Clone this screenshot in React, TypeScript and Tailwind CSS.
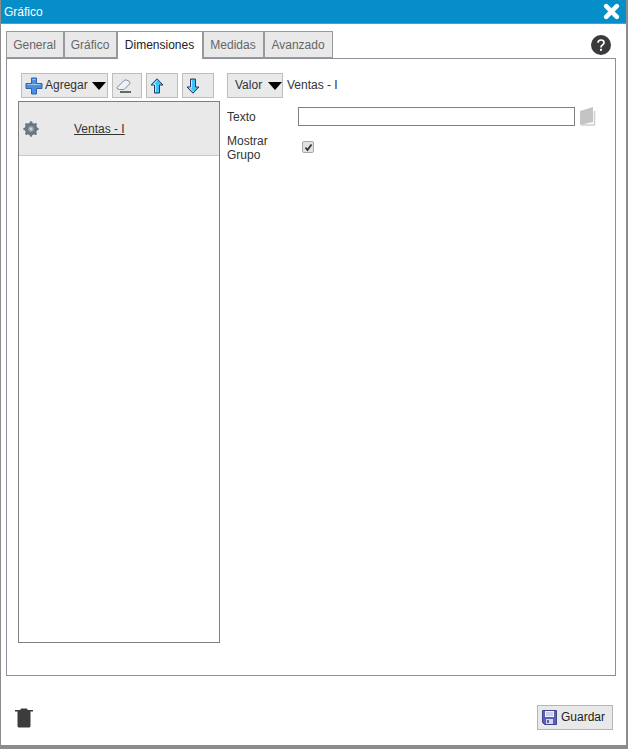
import React from "react";

const Caret = () => (
  <svg width="14" height="8" viewBox="0 0 14 8" className="shrink-0"><path d="M0 0h14L7 8z" fill="#000" /></svg>
);

const Plus = () => (
  <svg width="18" height="18" viewBox="0 0 18 18" className="shrink-0">
    <path d="M6.500 1h5v5.500H17v5h-5.500V17h-5v-5.500H1v-5h5.500z" fill="#4a90dc" stroke="#2b63b0" strokeWidth="1" />
    <path d="M7.500 2.500h3M2.500 7.500h13" stroke="#9cc6f0" strokeWidth="1" />
  </svg>
);

const Eraser = () => (
  <svg width="16" height="14" viewBox="0 0 16 14" className="shrink-0">
    <path d="M1 8.500 7.500 2Q9 0.500 10.500 1L13.500 2.500Q14.500 3.500 13.500 5L8 10.500H3.500Q1 10.500 1 8.500z" fill="#eef1f5" stroke="#7f8c9a" strokeWidth="1" />
    <path d="M4 13h11" stroke="#222" strokeWidth="1.300" />
  </svg>
);

const Arrow = ({ down }: { down?: boolean }) => (
  <svg width="14" height="16" viewBox="0 0 14 16" className="shrink-0" style={down ? { transform: "scaleY(-1)" } : undefined}>
    <path d="M7 0.800 13 7H9.500V15H4.500V7H1z" fill="#3cc4fa" stroke="#33335f" strokeWidth="1" strokeLinejoin="miter" />
    <path d="M7 2.500 3.500 6.200H5.500V14" stroke="#b6ecff" strokeWidth="1" fill="none" />
  </svg>
);

const Gear = () => (
  <svg width="16" height="16" viewBox="0 0 16 16" className="shrink-0">
    <g fill="#6c7680">
      <circle cx="8" cy="8" r="6.200" />
      {[0, 45, 90, 135].map((a) => (
        <rect key={a} x="6.700" y="0.300" width="2.600" height="15.400" rx="1" transform={`rotate(${a} 8 8)`} />
      ))}
    </g>
    <circle cx="8" cy="8" r="3" fill="#98a1aa" />
    <circle cx="8" cy="8" r="1.400" fill="#cfd5da" />
  </svg>
);

const Disk = () => (
  <svg width="15" height="15" viewBox="0 0 15 15" className="shrink-0">
    <path d="M0.500 0.500H14.500V14.500H2.500L0.500 12.500z" fill="#5a5fb8" stroke="#3f448f" strokeWidth="1" />
    <rect x="3" y="1" width="9" height="6" fill="#eef0f6" />
    <path d="M4 3h7M4 5h7" stroke="#a9adc8" strokeWidth="1" />
    <rect x="4" y="9" width="7" height="5" fill="#d4d6e6" />
    <rect x="5" y="10" width="2" height="3" fill="#5a5fb8" />
  </svg>
);

const ToolButton = ({ className, children }: { className: string; children: React.ReactNode }) => (
  <div className={`h-[25px] flex items-center border border-[#bdbdbd] bg-[#e9e9e9] ${className}`}>{children}</div>
);

const tabs = ["General", "Gráfico", "Dimensiones", "Medidas", "Avanzado"];
const tabWidths = ["w-[58px]", "w-[53px]", "w-[86px]", "w-[61px]", "w-[69px]"];

export default function App() {
  return (
    <div className="w-[628px] h-[749px] bg-white flex flex-col text-[12px] text-[#333] font-['Liberation_Sans',Arial,sans-serif] border-l border-[#8c8c8c] border-r-2 border-b-4">
      <div className="h-[24px] shrink-0 bg-[#068ec8] flex items-center justify-between pl-[3px] pr-[6px] border-b border-[#7f8f98] text-white">
        <span className="text-[12px]">Gráfico</span>
        <svg width="17" height="17" viewBox="0 0 17 17">
          <path d="M3.200 3.200 13.800 13.800M13.800 3.200 3.200 13.800" stroke="#fff" strokeWidth="4.600" strokeLinecap="round" />
        </svg>
      </div>

      <div className="flex-1 flex flex-col pl-[5px] pr-[10px] pt-[7px] min-h-0">
        <div className="h-[28px] flex items-start justify-between shrink-0 relative z-10">
          <div className="flex items-start h-[28px]">
            {tabs.map((t, i) =>
              i === 2 ? (
                <div key={t} className={`${tabWidths[i]} h-[28px] pb-px pr-px bg-white border border-[#999] border-b-0 flex items-center justify-center text-[#222]`}>{t}</div>
              ) : (
                <div key={t} className={`${tabWidths[i]} h-[27px] pr-px bg-[#e9e9e9] border border-[#999] flex items-center justify-center text-[#666]`}>{t}</div>
              )
            )}
          </div>
          <svg width="20" height="20" viewBox="0 0 20 20" className="mt-[4px] mr-[5px]">
            <circle cx="10" cy="10" r="10" fill="#3a3a3a" />
            <path d="M7 7.800Q7.100 5 10 5T13 7.500Q13 9 11.400 10T10 12.500" fill="none" stroke="#fff" strokeWidth="1.700" />
            <rect x="9" y="13.800" width="2" height="2" fill="#fff" />
          </svg>
        </div>

        <div className="h-[618px] -mt-px border border-[#8d9099] shrink-0 flex pl-[11px] pt-[14px] gap-[7px]">
          <div className="w-[202px] flex flex-col shrink-0">
            <div className="flex gap-[4px] pl-[3px] h-[25px]">
              <ToolButton className="w-[87px] pl-[3px] gap-[2px]">
                <Plus />
                <span className="mb-[2px]">Agregar</span>
                <span className="ml-[2px]"><Caret /></span>
              </ToolButton>
              <ToolButton className="w-[30px] pl-[3px]"><Eraser /></ToolButton>
              <ToolButton className="w-[32px] pl-[3px]"><Arrow /></ToolButton>
              <ToolButton className="w-[32px] pl-[3px]"><Arrow down /></ToolButton>
            </div>
            <div className="mt-[3px] h-[542px] border border-[#808080]">
              <div className="h-[54px] bg-[#e9e9e9] border-b border-[#c8c8c8] flex items-center pl-[4px]">
                <Gear />
                <span className="ml-[35px] underline">Ventas - I</span>
              </div>
            </div>
          </div>

          <div className="flex-1 flex flex-col">
            <div className="flex items-center h-[25px]">
              <ToolButton className="w-[56px] pl-[7px] gap-[5px]">
                <span className="mb-[2px]">Valor</span>
                <span className="ml-px"><Caret /></span>
              </ToolButton>
              <span className="ml-[4px] mb-[2px]">Ventas - I</span>
            </div>
            <div className="flex items-center mt-[9px] h-[19px]">
              <span className="w-[71px] mt-[1px]">Texto</span>
              <div className="w-[277px] h-[19px] border border-[#808080]" />
              <svg width="16" height="19" viewBox="0 0 16 19" className="ml-[5px]">
                <path d="M0 4 13 0V15L0 18z" fill="#c4c4c4" />
                <path d="M14.500 4V18H1" fill="none" stroke="#d0d0d0" strokeWidth="1.500" />
              </svg>
            </div>
            <div className="flex items-start mt-[8px]">
              <span className="w-[75px] leading-[14px]">Mostrar<br />Grupo</span>
              <div className="w-[12px] h-[12px] mt-[7px] rounded-[2px] border border-[#a8a8a8] bg-[#e2e2e2] flex items-center justify-center">
                <svg width="9" height="9" viewBox="0 0 9 9"><path d="M1.500 4.500 3.500 7 7.500 1.500" fill="none" stroke="#333" strokeWidth="1.800" /></svg>
              </div>
            </div>
          </div>
        </div>

        <div className="flex-1 flex items-end justify-between pl-[9px] pb-[15px]">
          <svg width="18" height="20" viewBox="0 0 18 20" className="mb-[2px]">
            <path d="M6 0.500H12L12.800 2H18V3.500H15.500V18Q15.500 19.500 14 19.500H4Q2.500 19.500 2.500 18V3.500H0V2H5.200z" fill="#3c3c3c" />
          </svg>
          <div className="w-[76px] h-[25px] mr-[3px] border border-[#b5b5b5] bg-[#e9e9e9] flex items-center pl-[4px] gap-[4px] text-[#222]">
            <Disk />
            <span className="mb-[2px]">Guardar</span>
          </div>
        </div>
      </div>
    </div>
  );
}
